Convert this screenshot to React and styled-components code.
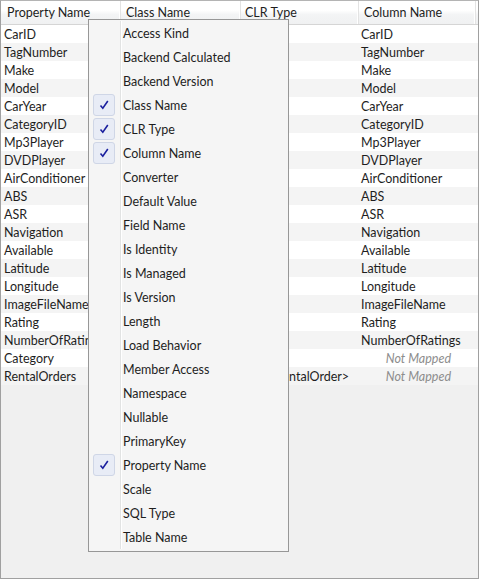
import React from "react";
import styled, { createGlobalStyle } from "styled-components";

const GlobalStyle = createGlobalStyle`
  html, body {
    margin: 0;
    padding: 0;
    background: #f0f0f0;
  }
`;

// class name and most clr types sit under the open menu, so they're left blank
const rows = [
  ["CarID", "", "", "CarID"],
  ["TagNumber", "", "", "TagNumber"],
  ["Make", "", "", "Make"],
  ["Model", "", "", "Model"],
  ["CarYear", "", "", "CarYear"],
  ["CategoryID", "", "", "CategoryID"],
  ["Mp3Player", "", "", "Mp3Player"],
  ["DVDPlayer", "", "", "DVDPlayer"],
  ["AirConditioner", "", "", "AirConditioner"],
  ["ABS", "", "", "ABS"],
  ["ASR", "", "", "ASR"],
  ["Navigation", "", "", "Navigation"],
  ["Available", "", "", "Available"],
  ["Latitude", "", "", "Latitude"],
  ["Longitude", "", "", "Longitude"],
  ["ImageFileName", "", "", "ImageFileName"],
  ["Rating", "", "", "Rating"],
  ["NumberOfRatings", "", "", "NumberOfRatings"],
  ["Category", "", "", null],
  ["RentalOrders", "", "IList<RentalOrder>", null],
];

const menuItems = [
  ["Access Kind", false],
  ["Backend Calculated", false],
  ["Backend Version", false],
  ["Class Name", true],
  ["CLR Type", true],
  ["Column Name", true],
  ["Converter", false],
  ["Default Value", false],
  ["Field Name", false],
  ["Is Identity", false],
  ["Is Managed", false],
  ["Is Version", false],
  ["Length", false],
  ["Load Behavior", false],
  ["Member Access", false],
  ["Namespace", false],
  ["Nullable", false],
  ["PrimaryKey", false],
  ["Property Name", true],
  ["Scale", false],
  ["SQL Type", false],
  ["Table Name", false],
];

const cols = "120px 120px 118px 117px";

const App = () => {
  return (
    <>
      <GlobalStyle />
      <Window>
        <Grid>
          <HeaderRow>
            <HeaderCell pad={6}>Property Name</HeaderCell>
            <HeaderCell pad={5}>Class Name</HeaderCell>
            <HeaderCell pad={4}>CLR Type</HeaderCell>
            <HeaderCell pad={5}>Column Name</HeaderCell>
          </HeaderRow>
          {rows.map((r, i) => (
            <Row key={r[0]} alt={i % 2 === 1}>
              <Cell>{r[0]}</Cell>
              <Cell pad={4}>{r[1]}</Cell>
              <Cell pad={4}>{r[2]}</Cell>
              {r[3] ? (
                <Cell pad={2}>{r[3]}</Cell>
              ) : (
                <Unmapped>Not Mapped</Unmapped>
              )}
            </Row>
          ))}
        </Grid>
        <Menu>
          {menuItems.map(([label, checked]) => (
            <MenuItem key={label}>
              <Gutter>
                {checked && (
                  <CheckBox>
                    <svg width="12" height="12" viewBox="0 0 12 12">
                      <path
                        d="M2.5 6.5 L4.8 9.2 L9.8 2"
                        fill="none"
                        stroke="#1a1f9e"
                        strokeWidth="1.6"
                      />
                    </svg>
                  </CheckBox>
                )}
              </Gutter>
              <Label>{label}</Label>
            </MenuItem>
          ))}
        </Menu>
      </Window>
    </>
  );
};

export default App;

const Window = styled.div`
  position: relative;
  box-sizing: border-box;
  width: 479px;
  height: 579px;
  border: 1px solid #a0a0a0;
  border-top-color: #b4b4b4;
  background: #f0f0f0;
  font-family: "Lato", "Open Sans", sans-serif;
  font-size: 12.5px;
  color: #1e1e1e;
  overflow: hidden;
`;

const Grid = styled.div`
  display: flex;
  flex-direction: column;
`;

const HeaderRow = styled.div`
  display: grid;
  grid-template-columns: ${cols};
  height: 23px;
  background: linear-gradient(#ffffff 0%, #ffffff 40%, #f3f4f5 60%, #f0f1f2 100%);
  border-bottom: 1px solid #d5d5d5;
`;

const HeaderCell = styled.div`
  display: flex;
  align-items: center;
  padding-left: ${(p) => p.pad || 4}px;
  border-right: 1px solid #e3e3e3;
  box-shadow: inset -1px 0 0 #ffffff;
  white-space: nowrap;
  overflow: hidden;
  color: #1e1e1e;
`;

const Row = styled.div`
  display: grid;
  grid-template-columns: ${cols};
  height: 18px;
  background: ${(p) => (p.alt ? "#f4f4f4" : "#ffffff")};
`;

const Cell = styled.div`
  display: flex;
  align-items: center;
  padding-left: ${(p) => p.pad || 3}px;
  white-space: nowrap;
  overflow: hidden;
`;

const Unmapped = styled.div`
  display: flex;
  align-items: center;
  justify-content: flex-end;
  padding-right: 25px;
  font-style: italic;
  color: #8d8d8d;
  white-space: nowrap;
`;

const Menu = styled.div`
  position: absolute;
  left: 87px;
  top: 18px;
  width: 199px;
  height: 530px;
  padding-top: 1px;
  background: #f5f5f5;
  border: 1px solid #979797;
  display: flex;
  flex-direction: column;
`;

const MenuItem = styled.div`
  display: flex;
  align-items: center;
  height: 24px;
`;

const Gutter = styled.div`
  box-sizing: border-box;
  width: 32px;
  height: 24px;
  padding-left: 4px;
  display: flex;
  align-items: center;
  border-right: 1px solid #e2e3e3;
  box-shadow: 1px 0 0 #ffffff;
`;

const CheckBox = styled.div`
  box-sizing: border-box;
  width: 22px;
  height: 22px;
  border: 1px solid #cfd6e6;
  border-radius: 3px;
  background: #e8ecf6;
  display: flex;
  align-items: center;
  justify-content: center;
`;

const Label = styled.div`
  padding-left: 2px;
  white-space: nowrap;
`;
